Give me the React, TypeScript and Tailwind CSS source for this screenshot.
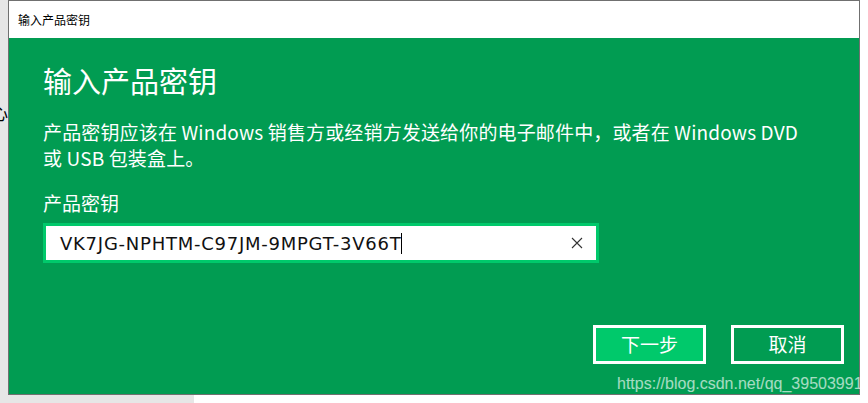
import React from 'react';

const productKey = 'VK7JG-NPHTM-C97JM-9MPGT-3V66T';

const cjk = { fontFamily: '"Noto Sans CJK SC", "Noto Sans", sans-serif' };

const App = () => {
  return (
    <div className="w-[868px] h-[403px] bg-white flex flex-col overflow-hidden" style={cjk}>
      <div className="flex h-[395px]">
        {/* desktop behind the dialog */}
        <div className="w-[8px] bg-[#e6e6e6] flex flex-col overflow-hidden">
          <div className="h-[104px]" />
          <div className="flex justify-end text-[17px] leading-none text-black">心</div>
        </div>

        <div className="relative w-[852px] h-[395px] border border-[#707070] flex flex-col">
          <div className="h-[37px] bg-white flex items-center pl-[9px] text-[12px] text-black">
            输入产品密钥
          </div>

          <div className="flex-1 bg-[#019c52] flex flex-col pl-[34px] pr-[15px] text-white">
            <h1 className="mt-[22px] text-[29px] leading-[40px] font-normal">输入产品密钥</h1>
            <p className="mt-[19px] w-[770px] text-[19px] leading-[26px] tracking-[0.15px]">
              产品密钥应该在 Windows 销售方或经销方发送给你的电子邮件中，或者在 Windows DVD 或 USB 包装盒上。
            </p>
            <div className="mt-[20px] text-[19px] leading-[24px]">产品密钥</div>
            <div className="mt-[8px] w-[556px] h-[40px] border-[3px] border-[#00c96b] bg-white flex items-center pl-[14px] pr-[12px]">
              <span
                className="text-[18px] text-[#111] tracking-[0.75px]"
                style={{ fontFamily: '"DejaVu Sans", sans-serif' }}
              >
                {productKey}
              </span>
              <span className="w-px h-[21px] bg-black" />
              <div className="flex-1" />
              <svg width="12" height="12" viewBox="0 0 12 12" className="mr-[1px]">
                <path d="M1 1 L11 11 M11 1 L1 11" stroke="#333" strokeWidth="1.1" />
              </svg>
            </div>

            <div className="flex-1" />
            <div className="flex justify-end gap-[25px] pb-[30px]">
              <button className="w-[113px] h-[39px] border-[3px] border-white bg-[#00c96b] text-white text-[19px] flex items-center justify-center">
                下一步
              </button>
              <button className="w-[113px] h-[39px] border-[3px] border-white bg-[#019c52] text-white text-[19px] flex items-center justify-center">
                取消
              </button>
            </div>
          </div>

          {/* csdn watermark over the dialog */}
          <span
            className="absolute left-[608px] top-[373px] text-[16px] leading-[20px] text-white/65 whitespace-nowrap"
            style={{ fontFamily: '"Liberation Sans", Arial, sans-serif' }}
          >
            https://blog.csdn.net/qq_39503991
          </span>
        </div>
      </div>
      <div className="h-[8px] w-[194px] bg-[#e6e6e6]" />
    </div>
  );
};

export default App;
